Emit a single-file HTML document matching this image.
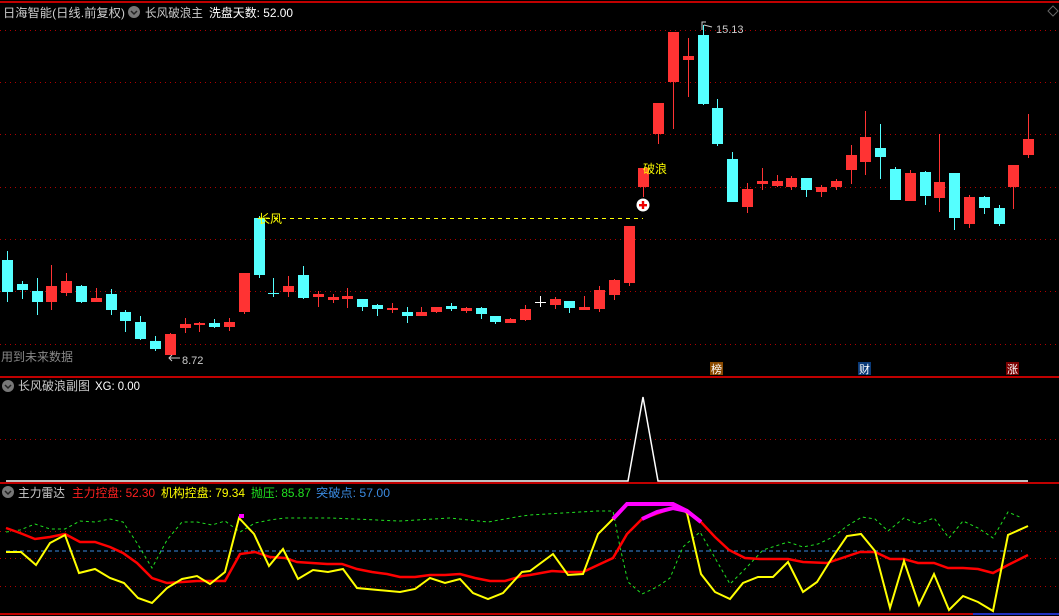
<!DOCTYPE html>
<html><head><meta charset="utf-8"><style>
html,body{margin:0;padding:0;background:#000;width:1059px;height:616px;overflow:hidden}
svg{display:block}
text{font-family:"Liberation Sans","Noto Sans CJK SC",sans-serif}
</style></head><body>
<svg id="s" width="1059" height="616" xmlns="http://www.w3.org/2000/svg">
<rect width="1059" height="616" fill="#000"/>
<g stroke="#b00000" stroke-width="1" stroke-dasharray="1,4">
<line x1="0" y1="30.5" x2="1059" y2="30.5"/><line x1="0" y1="82.5" x2="1059" y2="82.5"/>
<line x1="0" y1="134.5" x2="1059" y2="134.5"/><line x1="0" y1="187.5" x2="1059" y2="187.5"/>
<line x1="0" y1="239.5" x2="1059" y2="239.5"/><line x1="0" y1="291.5" x2="1059" y2="291.5"/>
<line x1="0" y1="344.5" x2="1059" y2="344.5"/>
<line x1="0" y1="439.5" x2="1059" y2="439.5"/>
<line x1="0" y1="531.5" x2="1059" y2="531.5"/><line x1="0" y1="558.5" x2="1059" y2="558.5"/><line x1="0" y1="586.5" x2="1059" y2="586.5"/>
</g>
<g stroke="#c00000" stroke-width="2">
<line x1="0" y1="2" x2="1059" y2="2"/>
<line x1="0" y1="377" x2="1059" y2="377"/>
<line x1="0" y1="483" x2="1059" y2="483"/>
<line x1="0" y1="614" x2="1059" y2="614"/>
</g>
<line x1="973" y1="614" x2="1059" y2="614" stroke="#2030c0" stroke-width="2"/>
<g id="candles"></g>
<line x1="258" y1="218.5" x2="643" y2="218.5" stroke="#ffff00" stroke-dasharray="4,4"/>
<text x="258" y="223" font-size="12" fill="#ffff00">长风</text>
<text x="643" y="173" font-size="12" fill="#ffff00">破浪</text>
<circle cx="643" cy="205" r="6.5" fill="#fff"/>
<rect x="639" y="204" width="8" height="2.4" fill="#e00"/><rect x="641.8" y="201" width="2.4" height="8" fill="#e00"/>
<text x="716" y="33" font-size="11" fill="#ccc">15.13</text>
<path d="M702 30 L702 22 L706 22 M704 25 L712 27" stroke="#ccc" fill="none"/>
<text x="182" y="364" font-size="11" fill="#ccc">8.72</text>
<path d="M169 358 L180 358 M172 355 L169 358 L172 361" stroke="#ccc" fill="none"/>
<text x="1" y="361" font-size="12" fill="#888">用到未来数据</text>
<rect x="710" y="362" width="13" height="13" fill="#8a4a00"/><text x="711" y="373" font-size="11" fill="#fff">榜</text>
<rect x="858" y="362" width="13" height="13" fill="#0a3a78"/><text x="859" y="373" font-size="11" fill="#fff">财</text>
<rect x="1006" y="362" width="13" height="13" fill="#7a0000"/><text x="1007" y="373" font-size="11" fill="#fff">涨</text>
<path d="M1053 6 L1058 11 L1053 16 L1048 11 Z" stroke="#666" fill="none"/>
<!-- headers -->
<text x="3" y="17" font-size="12" fill="#ccc" textLength="122" lengthAdjust="spacingAndGlyphs">日海智能(日线.前复权)</text>
<circle cx="134" cy="12" r="6" fill="#777"/><path d="M131 11 L134 14 L137 11" stroke="#222" stroke-width="1.5" fill="none"/>
<text x="145" y="17" font-size="12" fill="#ccc" textLength="58" lengthAdjust="spacingAndGlyphs">长风破浪主</text>
<text x="209" y="17" font-size="12" fill="#fff" textLength="84" lengthAdjust="spacingAndGlyphs">洗盘天数: 52.00</text>
<circle cx="8" cy="386" r="6" fill="#777"/><path d="M5 385 L8 388 L11 385" stroke="#222" stroke-width="1.5" fill="none"/>
<text x="18" y="390" font-size="12" fill="#ccc" textLength="72" lengthAdjust="spacingAndGlyphs">长风破浪副图</text>
<text x="95" y="390" font-size="12" fill="#fff" textLength="45" lengthAdjust="spacingAndGlyphs">XG: 0.00</text>
<circle cx="8" cy="492" r="6" fill="#777"/><path d="M5 491 L8 494 L11 491" stroke="#222" stroke-width="1.5" fill="none"/>
<text x="18" y="497" font-size="12" fill="#ccc" textLength="47" lengthAdjust="spacingAndGlyphs">主力雷达</text>
<text x="72" y="497" font-size="12" fill="#ff2020" textLength="83" lengthAdjust="spacingAndGlyphs">主力控盘: 52.30</text>
<text x="161" y="497" font-size="12" fill="#ffff00" textLength="84" lengthAdjust="spacingAndGlyphs">机构控盘: 79.34</text>
<text x="251" y="497" font-size="12" fill="#20e020" textLength="60" lengthAdjust="spacingAndGlyphs">抛压: 85.87</text>
<text x="316" y="497" font-size="12" fill="#3a8ae0" textLength="74" lengthAdjust="spacingAndGlyphs">突破点: 57.00</text>
<!-- panel 2 -->
<polyline points="6,481 628,481 643,397 658,481 1028,481" stroke="#fff" stroke-width="1.5" fill="none"/>
<!-- panel 3 -->
<line x1="6" y1="551" x2="1022" y2="551" stroke="#3a8ae0" stroke-dasharray="4,3"/>
<polyline stroke="#20e020" stroke-dasharray="3,3" fill="none" points="6,532 20,530 35,524 50,529 65,529 80,521 95,522 110,519 123,522 137,543 152,568 167,540 182,522 197,522 212,525 225,521 240,532 255,523 270,520 285,518 330,518 400,521 450,518 488,522 522,516 530,515 563,513 597,511 613,511 620,547 628,582 642,594 657,587 670,578 683,547 700,532 715,558 730,584 747,567 763,550 788,542 803,547 818,544 833,537 847,526 862,517 875,519 888,531 904,518 918,524 934,518 949,538 963,521 978,528 993,538 1008,512 1022,518"/>
<polyline stroke="#ff0000" stroke-width="2.5" fill="none" points="6,528 20,533 35,539 50,537 65,534 80,542 95,542 110,547 123,553 137,563 152,578 167,583 182,582 197,581 212,581 225,581 240,554 255,552 270,557 285,558 297,562 312,563 327,564 342,564 357,569 372,572 387,574 400,577 415,577 430,575 445,575 460,574 475,578 490,581 505,581 522,576 530,575 552,571 568,572 583,572 598,565 613,558 627,534 642,519 673,508 687,510 701,522 715,537 729,550 745,558 760,559 788,559 803,562 827,563 845,557 860,552 875,552 890,559 904,559 918,563 934,563 948,568 963,568 978,569 993,573 1008,565 1028,555"/>
<polyline stroke="#ffff00" stroke-width="2" fill="none" points="6,552 21,552 36,565 50,543 65,535 79,573 95,569 110,578 124,583 138,598 152,603 167,588 182,579 197,576 210,584 225,572 239,518 254,534 269,566 283,549 298,579 313,570 328,572 343,569 357,588 400,592 415,589 430,578 445,583 460,579 473,593 488,599 503,593 522,572 530,571 553,554 568,575 583,574 598,534 613,519 627,504 673,504 687,513 701,574 715,592 730,599 743,583 758,577 773,577 788,562 803,592 817,582 832,558 847,536 861,534 875,551 890,608 904,561 919,605 934,574 949,610 963,596 978,602 993,611 1008,535 1028,526"/>
<polyline stroke="#ff00ff" stroke-width="4" fill="none" points="613,519 627,504 673,504 687,511"/>
<polyline stroke="#ff00ff" stroke-width="4" fill="none" points="642,519 657,512 673,508 687,511 701,522"/>
<rect x="239" y="514" width="5" height="4" fill="#ff00ff"/>
</svg>
<script>
var d=[
['c',260,292,251,302],['c',284,290,281,299],['c',291,302,278,315],['r',286,302,265,310],['r',281,293,273,296],
['c',286,302,285,303],['r',298,302,288,302],['c',294,310,289,315],['c',312,321,310,332],['c',322,339,316,340],
['c',341,349,336,351],['r',334,355,333,355],['r',324,328,318,333],['r',323,325,322,332],['c',323,327,319,328],
['r',322,327,318,331],['r',273,312,273,314],['c',218,275,216,278],['x',293,294,278,297,'#5ff'],['r',286,292,276,297],
['c',275,298,266,299],['r',294,297,291,307],['r',297,300,294,303],['r',296,299,288,308],['c',299,307,299,311],
['c',305,309,304,316],['r',308,310,303,313],['c',312,316,307,323],['r',312,316,307,316],['r',307,312,307,313],
['c',306,309,303,311],['r',308,311,307,313],['c',308,314,307,319],['c',316,322,316,324],['r',319,323,318,323],
['r',309,320,305,321],['x',302,303,296,307,'#fff'],['r',299,305,297,309],['c',301,308,301,313],['r',307,310,296,310],
['r',290,309,286,312],['r',280,295,279,300],['r',226,283,226,286],['r',168,187,168,197],['r',103,134,103,144],
['r',32,82,32,129],['r',56,60,38,97],['c',35,104,25,105],['c',108,144,99,146],['c',159,202,152,202],
['r',189,207,183,213],['r',181,184,168,190],['r',181,186,175,187],['r',178,187,176,190],['c',178,190,178,197],
['r',187,192,185,197],['r',181,187,179,190],['r',155,170,145,184],['r',137,162,111,175],['c',148,157,124,179],
['c',169,200,167,200],['r',173,201,170,201],['c',172,196,171,205],['r',182,198,134,212],['c',173,218,173,230],
['r',197,224,195,228],['c',197,208,196,214],['c',208,224,205,226],['r',165,187,165,209],['r',139,155,114,158]];
var g=document.getElementById('candles'),h='';
for(var i=0;i<d.length;i++){var c=d[i],x=Math.round(7+i*14.8);
var col=c[0]=='r'?'#ff3333':(c[0]=='c'?'#55ffff':c[5]);
h+='<line x1="'+(x+.5)+'" y1="'+c[3]+'" x2="'+(x+.5)+'" y2="'+c[4]+'" stroke="'+col+'"/>';
if(c[0]=='x')h+='<line x1="'+(x-5)+'" y1="'+(c[1]+.5)+'" x2="'+(x+6)+'" y2="'+(c[1]+.5)+'" stroke="'+col+'"/>';
else h+='<rect x="'+(x-5)+'" y="'+c[1]+'" width="11" height="'+Math.max(2,c[2]-c[1])+'" fill="'+col+'"/>';}
g.innerHTML=h;
</script>
</body></html>
